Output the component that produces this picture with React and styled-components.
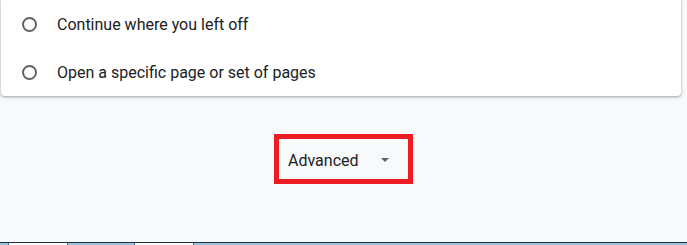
import React from "react";
import styled, { createGlobalStyle } from "styled-components";

const GlobalStyle = createGlobalStyle`
  html, body {
    margin: 0;
    padding: 0;
    background: #f8f9fa;
    font-family: Roboto, "Liberation Sans", Arial, sans-serif;
  }
`;

const Page = styled.div`
  height: 245px;
  display: flex;
  flex-direction: column;
  overflow: hidden;
`;

const Card = styled.div`
  margin-left: 1px;
  width: 680px;
  background: #fff;
  border-radius: 0 0 4px 4px;
  box-shadow: 0 1px 2px rgba(60, 64, 67, 0.3), 0 1px 3px 1px rgba(60, 64, 67, 0.15);
`;

const Row = styled.label`
  display: flex;
  align-items: center;
  height: 48px;
  padding-left: 21px;
  font-size: 16px;
  color: #202124;
`;

const Radio = styled.span`
  box-sizing: border-box;
  width: 15px;
  height: 15px;
  border: 2px solid #5f6368;
  border-radius: 50%;
  margin-right: 20px;
  flex-shrink: 0;
`;

const AdvancedWrap = styled.div`
  display: flex;
  justify-content: center;
  margin-top: 38px;
  flex: 1;
`;

const Highlight = styled.div`
  box-sizing: border-box;
  width: 139px;
  height: 50px;
  border: 5px solid #ed1c24;
  display: flex;
  align-items: center;
  padding-left: 9px;
  padding-top: 2px;
`;

const AdvancedButton = styled.button`
  display: flex;
  align-items: center;
  background: none;
  border: none;
  padding: 0;
  font-family: inherit;
  font-size: 16px;
  color: #202124;
  cursor: pointer;
`;

const Arrow = styled.svg`
  width: 24px;
  height: 24px;
  margin-left: 14px;
  fill: #5f6368;
`;

const Taskbar = styled.div`
  height: 2px;
  display: flex;
  border-top: 1px solid #1b2f45;
  background: #9ec3dc;
`;

const TaskItem = styled.div`
  width: ${(p) => p.w}px;
  background: ${(p) => (p.active ? "#ffffff" : "#9ec3dc")};
  border-right: 1px solid #4b6a82;
`;

export default function App() {
  return (
    <Page>
      <GlobalStyle />
      <Card>
        <Row>
          <Radio />
          Continue where you left off
        </Row>
        <Row>
          <Radio />
          Open a specific page or set of pages
        </Row>
      </Card>
      <AdvancedWrap>
        <Highlight>
          <AdvancedButton>
            Advanced
            <Arrow viewBox="0 0 24 24">
              <path d="M8 10l4 4 4-4z" />
            </Arrow>
          </AdvancedButton>
        </Highlight>
      </AdvancedWrap>
      <Taskbar>
        <TaskItem w={8} />
        <TaskItem w={58} active />
        <TaskItem w={66} />
        <TaskItem w={58} active />
      </Taskbar>
    </Page>
  );
}
